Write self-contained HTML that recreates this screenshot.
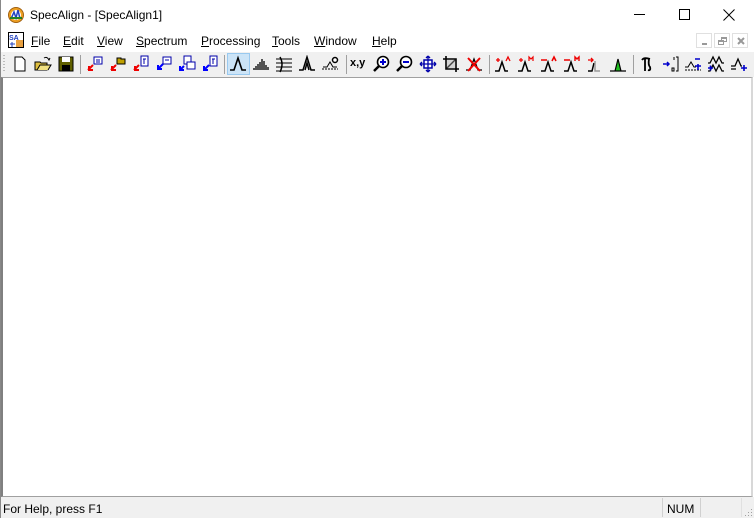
<!DOCTYPE html>
<html><head><meta charset="utf-8"><style>
*{margin:0;padding:0;box-sizing:border-box}
body{width:754px;height:518px;overflow:hidden;background:#fff;font-family:"Liberation Sans",sans-serif;position:relative}
.a{position:absolute}
.t{font-size:12px;color:#000}
svg.i{position:absolute;top:55px;width:18px;height:18px}
.sep{position:absolute;top:55px;width:1px;height:19px;background:#a0a0a0}
.m{position:absolute;top:34px;font-size:12px}
.m u{text-decoration:underline}
.mb{position:absolute;top:33px;width:16px;height:15px;border:1px solid #e0e0e0;background:#fff}
</style></head><body>
<div class="a" style="left:0;top:0;width:1px;height:518px;background:#888"></div>
<!-- title -->
<svg class="a" style="left:8px;top:7px" width="16" height="16" viewBox="0 0 16 16"><circle cx="8" cy="8" r="7.5" fill="#f0a020" stroke="#a06010"/><circle cx="8" cy="8" r="5" fill="#fff"/><path d="M3 12 L6 5 L8 11 L10 3 L12 12" stroke="#2040c0" stroke-width="1.5" fill="none"/><path d="M2 11 H14" stroke="#208020" stroke-width="2"/></svg>
<div class="a" style="left:30px;top:8px;font-size:12px">SpecAlign - [SpecAlign1]</div>
<div class="a" style="left:634px;top:14px;width:11px;height:1px;background:#000"></div>
<div class="a" style="left:679px;top:9px;width:11px;height:11px;border:1px solid #000"></div>
<svg class="a" style="left:723px;top:9px" width="12" height="12"><path d="M0.5 0.5L11.5 11.5M11.5 0.5L0.5 11.5" stroke="#000"/></svg>
<!-- menu -->
<svg class="a" style="left:8px;top:32px" width="16" height="16"><rect x="0.5" y="0.5" width="15" height="15" fill="#fff" stroke="#000"/><rect x="8" y="8" width="7" height="7" fill="#e8a040"/><text x="1" y="8" font-size="7" font-weight="bold" fill="#2040c0">SA</text><path d="M4 10V15M2 12H7" stroke="#2040c0"/></svg>
<div class="m" style="left:31px"><u>F</u>ile</div>
<div class="m" style="left:63px"><u>E</u>dit</div>
<div class="m" style="left:97px"><u>V</u>iew</div>
<div class="m" style="left:136px"><u>S</u>pectrum</div>
<div class="m" style="left:201px"><u>P</u>rocessing</div>
<div class="m" style="left:272px"><u>T</u>ools</div>
<div class="m" style="left:314px"><u>W</u>indow</div>
<div class="m" style="left:372px"><u>H</u>elp</div>
<div class="mb" style="left:696px"><div class="a" style="left:5px;top:9px;width:5px;height:2px;background:#999"></div></div>
<div class="mb" style="left:714px"><div class="a" style="left:6px;top:3px;width:6px;height:5px;border:1px solid #999;border-top-width:2px"></div><div class="a" style="left:3px;top:6px;width:6px;height:5px;border:1px solid #999;border-top-width:2px;background:#fff"></div></div>
<div class="mb" style="left:732px"><svg class="a" style="left:4px;top:3px" width="8" height="8"><path d="M1 1L7 7M7 1L1 7" stroke="#999" stroke-width="2"/></svg></div>
<!-- toolbar -->
<div class="a" style="left:1px;top:51px;width:753px;height:26px;background:#f0f0f0;border-top:1px solid #fff"></div>
<div class="a" style="left:3px;top:55px;width:2px;height:18px;background:repeating-linear-gradient(#bbb 0 1px,transparent 1px 3px)"></div>
<div class="a" style="left:227px;top:53px;width:23px;height:22px;background:#cce4f7;border:1px solid #99c9ef"></div>
<div class="sep" style="left:80px"></div><div class="sep" style="left:224px"></div><div class="sep" style="left:346px"></div><div class="sep" style="left:489px"></div><div class="sep" style="left:633px"></div>
<svg class="i" style="left:11px" viewBox="0 0 18 18"><path d="M4 2H11L14 5V16H4Z" fill="#fff" stroke="#000"/></svg>
<svg class="i" style="left:34px" viewBox="0 0 18 18"><path d="M1 7H6L7 8H13V15H1Z" fill="#e0c040" stroke="#000"/><path d="M3 15L6 10H17L14 15" fill="#f0e080" stroke="#000"/><path d="M10 3Q13 1 15 5L16 3" stroke="#000" fill="none"/></svg>
<svg class="i" style="left:57px" viewBox="0 0 18 18"><rect x="2" y="2" width="14" height="14" fill="#606000" stroke="#000"/><rect x="5" y="2" width="8" height="5" fill="#fff"/><rect x="5" y="10" width="8" height="6" fill="#000"/></svg>
<svg class="i" style="left:86px" viewBox="0 0 18 18"><rect x="8" y="2" width="8" height="7" fill="#fff" stroke="#00a"/><path d="M10 5H14M10 7H14" stroke="#00a"/><path d="M2 15L7 10M3 11V15H7" stroke="#e00" stroke-width="2" fill="none"/></svg>
<svg class="i" style="left:109px" viewBox="0 0 18 18"><path d="M8 3H12V4H16V9H8Z" fill="#c0a000" stroke="#000"/><path d="M2 15L7 10M3 11V15H7" stroke="#e00" stroke-width="2" fill="none"/></svg>
<svg class="i" style="left:132px" viewBox="0 0 18 18"><rect x="9" y="1" width="7" height="10" fill="#fff" stroke="#00a"/><path d="M11 4H14M12 4V9" stroke="#00a"/><path d="M2 15L7 10M3 11V15H7" stroke="#e00" stroke-width="2" fill="none"/></svg>
<svg class="i" style="left:155px" viewBox="0 0 18 18"><rect x="8" y="2" width="8" height="7" fill="#fff" stroke="#00a"/><path d="M10 5H14" stroke="#00a"/><path d="M8 9L3 14M3 10V14H7" stroke="#00f" stroke-width="2" fill="none"/></svg>
<svg class="i" style="left:178px" viewBox="0 0 18 18"><rect x="6" y="1" width="7" height="8" fill="#fff" stroke="#00a"/><rect x="9" y="7" width="8" height="7" fill="#fff" stroke="#00a"/><path d="M6 11L2 15M2 11V15H6" stroke="#00f" stroke-width="2" fill="none"/></svg>
<svg class="i" style="left:201px" viewBox="0 0 18 18"><rect x="9" y="1" width="7" height="10" fill="#fff" stroke="#00a"/><path d="M11 4H14M12 4V9" stroke="#00a"/><path d="M8 10L3 15M3 11V15H7" stroke="#00f" stroke-width="2" fill="none"/></svg>
<svg class="i" style="left:229px" viewBox="0 0 18 18"><path d="M1 15H5L9 3L13 15H17" stroke="#000" stroke-width="1.6" fill="none"/></svg>
<svg class="i" style="left:252px" viewBox="0 0 18 18"><path d="M2 15V13M4 15V11M6 15V9M8 15V7M10 15V4M12 15V6M14 15V10M16 15V12" stroke="#000" stroke-width="1.3"/></svg>
<svg class="i" style="left:275px" viewBox="0 0 18 18"><path d="M1 4H17M1 8H17M1 12H17M1 16H17" stroke="#000"/><path d="M5 2Q9 9 5 17" stroke="#000" fill="none" stroke-width="1.5"/></svg>
<svg class="i" style="left:298px" viewBox="0 0 18 18"><path d="M1 15H5L9 2L13 15H17M7 15L9 8L11 15" stroke="#000" stroke-width="1.5" fill="none"/></svg>
<svg class="i" style="left:321px" viewBox="0 0 18 18"><path d="M1 14H17" stroke="#000" stroke-dasharray="2 1"/><path d="M2 12H6L9 7L12 12H16" stroke="#000" fill="none"/><circle cx="14" cy="5" r="2.5" fill="#fff" stroke="#000" stroke-width="1.5"/></svg>
<div class="a" style="left:350px;top:57px;font-size:11px;font-weight:bold">x,y</div>
<svg class="i" style="left:372px" viewBox="0 0 18 18"><circle cx="11" cy="7" r="5.5" fill="#fff" stroke="#000" stroke-width="1.6"/><path d="M8 7H14M11 4V10" stroke="#00c" stroke-width="2"/><path d="M7 11L2 16" stroke="#000" stroke-width="2.5"/></svg>
<svg class="i" style="left:395px" viewBox="0 0 18 18"><circle cx="11" cy="7" r="5.5" fill="#fff" stroke="#000" stroke-width="1.6"/><path d="M8 7H14" stroke="#00c" stroke-width="2"/><path d="M7 11L2 16" stroke="#000" stroke-width="2.5"/></svg>
<svg class="i" style="left:419px" viewBox="0 0 18 18"><rect x="5" y="5" width="8" height="8" fill="#fff" stroke="#00a" stroke-width="1.5"/><path d="M1 9H17M9 1V17M1 9L3 7M1 9L3 11M17 9L15 7M17 9L15 11M9 1L7 3M9 1L11 3M9 17L7 15M9 17L11 15" stroke="#00a" stroke-width="1.3" fill="none"/></svg>
<svg class="i" style="left:442px" viewBox="0 0 18 18"><path d="M4 1V14H17M1 4H14V17" stroke="#000" stroke-width="1.6" fill="none"/><path d="M5 13L13 5" stroke="#000" stroke-width="1.4"/><rect x="5" y="5" width="8" height="8" fill="#aaa" opacity=".4"/></svg>
<svg class="i" style="left:465px" viewBox="0 0 18 18"><path d="M1 15H5L9 4L13 15H17" stroke="#000" fill="none" stroke-width="1.3"/><path d="M3 3L15 16M15 3L3 16" stroke="#e00" stroke-width="2"/></svg>
<svg class="i" style="left:494px" viewBox="0 0 18 18"><path d="M1 16H5L8 7L11 16H14" stroke="#000" fill="none" stroke-width="1.5"/><path d="M2 5H6M4 3V7M12 6L14 2L16 6" stroke="#e00" stroke-width="1.3" fill="none"/></svg>
<svg class="i" style="left:517px" viewBox="0 0 18 18"><path d="M1 16H5L8 7L11 16H14" stroke="#000" fill="none" stroke-width="1.5"/><path d="M2 5H6M4 3V7M12 6V2L14 4L16 2V6" stroke="#e00" stroke-width="1.2" fill="none"/></svg>
<svg class="i" style="left:540px" viewBox="0 0 18 18"><path d="M1 16H5L8 7L11 16H14" stroke="#000" fill="none" stroke-width="1.5"/><path d="M1 5H7M12 6L14 2L16 6" stroke="#e00" stroke-width="1.6" fill="none"/></svg>
<svg class="i" style="left:563px" viewBox="0 0 18 18"><path d="M1 16H5L8 7L11 16H14" stroke="#000" fill="none" stroke-width="1.5"/><path d="M1 5H7M12 6V2L14 4L16 2V6" stroke="#e00" stroke-width="1.4" fill="none"/></svg>
<svg class="i" style="left:586px" viewBox="0 0 18 18"><path d="M2 16H6L8 8" stroke="#000" fill="none" stroke-width="1.5"/><path d="M9 6V16H14" stroke="#999" fill="none" stroke-width="1.5"/><path d="M2 5H7M5 3L7 5L5 7" stroke="#e00" stroke-width="1.3" fill="none"/></svg>
<svg class="i" style="left:609px" viewBox="0 0 18 18"><path d="M1 16H6L9 4L12 16H17Z" fill="#20c020" stroke="#000" stroke-width="1.2"/></svg>
<svg class="i" style="left:638px" viewBox="0 0 18 18"><path d="M4 5Q6 2 12 4M7 4V16M11 4Q10 10 12 12Q13 16 10 15" stroke="#000" stroke-width="1.8" fill="none"/></svg>
<svg class="i" style="left:661px" viewBox="0 0 18 18"><path d="M2 9H8M6 7L8 9L6 11" stroke="#00c" stroke-width="1.5" fill="none"/><path d="M13 2V5M15 2H17V16H15M11 13H13V16H11Z" stroke="#000" fill="none"/></svg>
<svg class="i" style="left:684px" viewBox="0 0 18 18"><path d="M1 15H17" stroke="#000" stroke-dasharray="2 1"/><path d="M1 12H4L7 7L10 12H12" stroke="#000" fill="none"/><path d="M11 4H16M11 11H17M14 9V15" stroke="#00c" stroke-width="1.6"/></svg>
<svg class="i" style="left:707px" viewBox="0 0 18 18"><path d="M1 8H3L6 2L9 8L12 2L15 8H17M1 16H3L6 10L9 16L12 10L15 16H17" stroke="#000" fill="none" stroke-width="1.3"/><path d="M1 13H6M3.5 10.5V15.5" stroke="#00c" stroke-width="1.6"/></svg>
<svg class="i" style="left:730px" viewBox="0 0 18 18"><path d="M1 11H5L8 4L11 11H12M1 14H6" stroke="#000" fill="none" stroke-width="1.3"/><path d="M11 13H17M14 10V16" stroke="#00c" stroke-width="1.6"/></svg>
<!-- client -->
<div class="a" style="left:1px;top:77px;width:752px;height:420px;border:1px solid #a0a0a0;border-left:2px solid #808080;border-right:2px solid #d8d8d8;background:#fff"></div>
<!-- status -->
<div class="a" style="left:1px;top:497px;width:753px;height:21px;background:#f0f0f0"></div>
<div class="a t" style="left:3px;top:502px">For Help, press F1</div>
<div class="a" style="left:662px;top:498px;width:1px;height:19px;background:#d0d0d0"></div>
<div class="a t" style="left:667px;top:502px">NUM</div>
<div class="a" style="left:700px;top:498px;width:1px;height:19px;background:#d0d0d0"></div>
<div class="a" style="left:741px;top:498px;width:1px;height:19px;background:#e0e0e0"></div>
<svg class="a" style="left:744px;top:508px" width="9" height="9"><path d="M7 1h1v1h-1zM7 4h1v1h-1zM4 4h1v1h-1zM7 7h1v1h-1zM4 7h1v1h-1zM1 7h1v1h-1z" fill="#a0a0a0"/></svg>
</body></html>
